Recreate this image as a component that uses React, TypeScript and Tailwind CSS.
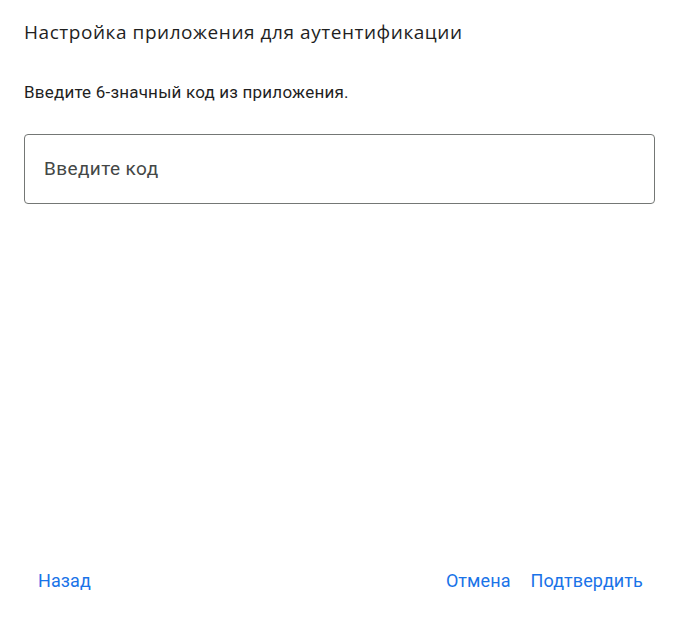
import React from "react";

const App: React.FC = () => {
  return (
    <div className="flex flex-col h-[622px] w-[679px] bg-white font-['Roboto',sans-serif] text-[#1f1f1f]">
      <div className="px-6 pt-[20px]">
        <h1 className="text-[19px] leading-6 tracking-[0.55px] font-['Open_Sans','Roboto',sans-serif] text-[#1f1f1f]">
          Настройка приложения для аутентификации
        </h1>
        <p className="mt-[38px] text-[17px] leading-5 tracking-[0.2px] text-[#1f1f1f]">
          Введите 6-значный код из приложения.
        </p>
        <div className="mt-[32px] h-[70px] rounded-[4px] border border-[#747775] flex items-center px-[19px]">
          <input
            type="text"
            placeholder="Введите код"
            className="w-full outline-none text-[19px] tracking-[0.4px] text-[#444746] placeholder:text-[#444746] bg-transparent"
          />
        </div>
      </div>
      <div className="mt-auto flex items-center justify-between pl-6 pr-[26px] pb-[22px]">
        <button className="h-10 px-[14px] rounded-full text-[18px] tracking-[0.1px] text-[#1a73e8]">
          Назад
        </button>
        <div className="flex">
          <button className="h-10 px-[10px] rounded-full text-[18px] tracking-[0.1px] text-[#1a73e8]">
            Отмена
          </button>
          <button className="h-10 px-[10px] rounded-full text-[18px] tracking-[0.1px] text-[#1a73e8]">
            Подтвердить
          </button>
        </div>
      </div>
    </div>
  );
};

export default App;
